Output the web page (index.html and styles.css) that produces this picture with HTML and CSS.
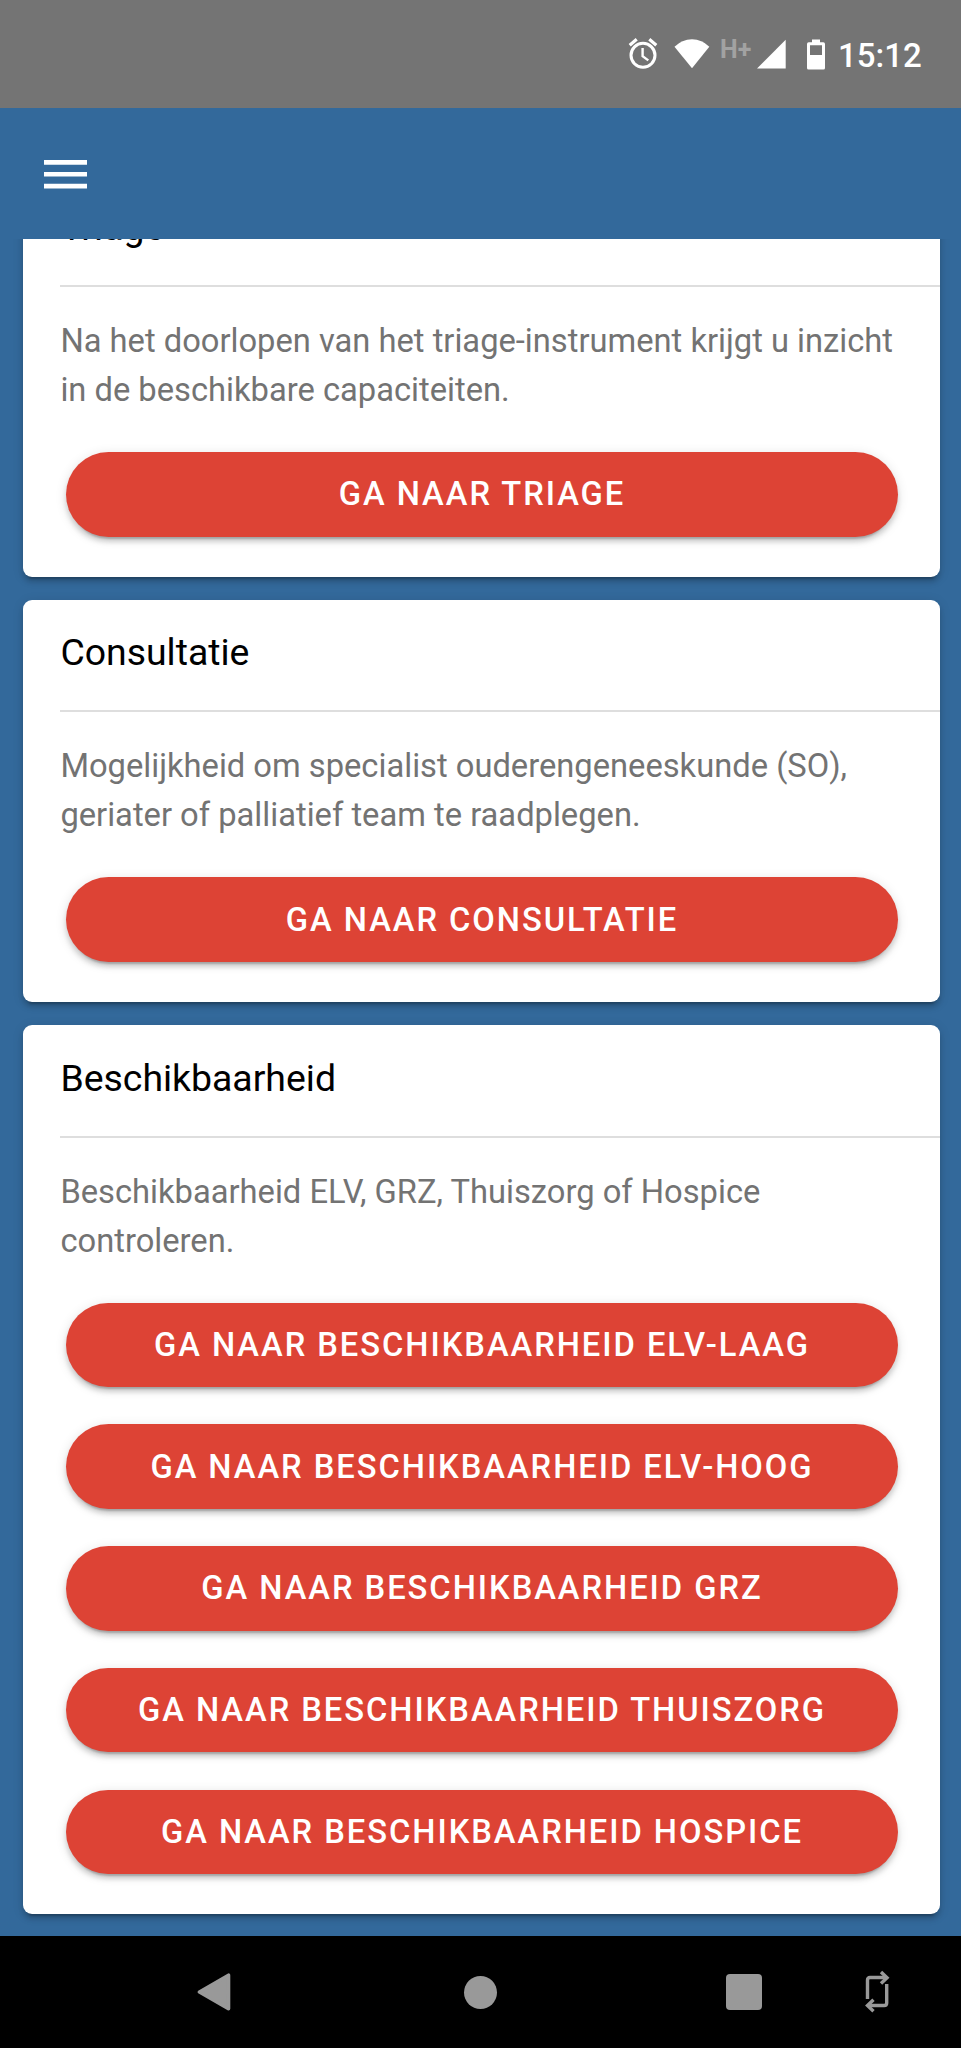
FILE: index.html
```html
<!DOCTYPE html>
<html lang="nl">
<head>
<meta charset="utf-8">
<title>Triage</title>
<link rel="stylesheet" href="styles.css">
</head>
<body>
<div class="statusbar">
  <svg class="alarm" width="32" height="36" viewBox="627 36 32 36" fill="none" stroke="#fff"><circle cx="643" cy="55.3" r="12" stroke-width="3"/><path d="M629.7 45.2l7-5.9M656.3 45.2l-7-5.9" stroke-width="3.2"/><path d="M642.6 48v8.2l5.7 4.2" stroke-width="2.4"/></svg>
  <svg class="wifi" width="36" height="36" viewBox="674 36 36 36"><path d="M674.5 46.7Q682 39.2 692 39.2t17.300 7.500L692 68.300z" fill="#fff"/></svg>
  <span class="network">H+</span>
  <svg class="signal" width="30" height="36" viewBox="756 36 30 36"><path d="M757 68.500L785.700 39.800V68.500z" fill="#fff"/></svg>
  <svg class="battery" width="18" height="36" viewBox="807 36 18 36"><path fill-rule="evenodd" d="M812 39.500h8v2.800h3.300q1.700 0 1.700 1.700v24q0 1.500-1.500 1.500h-15q-1.500 0-1.500-1.500V44q0-1.700 1.700-1.700h3.300zM810 45.300V55h12v-9.700z" fill="#fff"/></svg>
  <span class="clock">15:12</span>
</div>
<header class="toolbar">
  <svg width="43" height="29" viewBox="0 0 43 29"><path d="M0 0h43v4.700H0zM0 11.900h43v4.700H0zM0 23.800h43v4.700H0z" fill="#fff"/></svg>
</header>
<main class="content">
  <section class="card">
    <h2>Triage</h2>
    <div class="body">
      <p>Na het doorlopen van het triage-instrument krijgt u inzicht in de beschikbare capaciteiten.</p>
      <button>GA NAAR TRIAGE</button>
    </div>
  </section>
  <section class="card">
    <h2>Consultatie</h2>
    <div class="body">
      <p>Mogelijkheid om specialist ouderengeneeskunde (SO), geriater of palliatief team te raadplegen.</p>
      <button>GA NAAR CONSULTATIE</button>
    </div>
  </section>
  <section class="card">
    <h2>Beschikbaarheid</h2>
    <div class="body">
      <p>Beschikbaarheid ELV, GRZ, Thuiszorg of Hospice controleren.</p>
      <button>GA NAAR BESCHIKBAARHEID ELV-LAAG</button>
      <button>GA NAAR BESCHIKBAARHEID ELV-HOOG</button>
      <button>GA NAAR BESCHIKBAARHEID GRZ</button>
      <button>GA NAAR BESCHIKBAARHEID THUISZORG</button>
      <button>GA NAAR BESCHIKBAARHEID HOSPICE</button>
    </div>
  </section>
</main>
<nav class="navbar">
  <svg class="back" width="34" height="38" viewBox="0 0 34 38"><path d="M2.500 19L31.500 2.200v33.600z" fill="#999" stroke="#999" stroke-width="3.600" stroke-linejoin="round"/></svg>
  <span class="home"></span>
  <span class="recent"></span>
  <svg class="rotate" width="26" height="44" viewBox="0 0 26 44" fill="none" stroke="#999" stroke-width="3.400"><path d="M3.500 29V10q0-2.500 2.500-2.500h16"/><path d="M17 2l6 5.700-6 5.700"/><path d="M22.700 14v19q0 2.500-2.500 2.500H4"/><path d="M9.500 29.800l-6 5.700 6 5.700"/></svg>
</nav>
</body>
</html>
```
FILE: styles.css
```css
* { box-sizing: border-box; }

body {
  margin: 0;
  height: 2048px;
  overflow: hidden;
  display: flex;
  flex-direction: column;
  background: #33699b;
  font-family: Roboto, "Liberation Sans", sans-serif;
}

.statusbar {
  flex: none;
  height: 108px;
  padding: 36px 41px 0 0;
  display: flex;
  justify-content: flex-end;
  align-items: flex-start;
  background: #747474;
  color: #fff;
}

.statusbar svg { flex: none; }
.wifi { margin-left: 15px; }
.network {
  width: 36px;
  margin: 0 0 0 10px;
  font-size: 25px;
  font-weight: 700;
  line-height: 28px;
  color: #a2a2a2;
}
.battery { margin-left: 21px; }
.clock {
  width: 82px;
  margin-left: 13px;
  font-size: 33px;
  font-weight: 500;
  line-height: 39px;
  white-space: nowrap;
}

.toolbar {
  flex: none;
  height: 131px;
  padding: 52px 44px;
}
.toolbar svg { display: block; }

.content {
  flex: 1;
  min-height: 0;
  overflow: hidden;
  padding: 0 21px 0 23px;
}

.card {
  height: 402px;
  margin-bottom: 23.400px;
  background: #fff;
  border-radius: 9px;
  box-shadow: 0 7px 2px -5px rgba(0, 0, 0, .2), 0 5px 5px rgba(0, 0, 0, .14), 0 2px 12px rgba(0, 0, 0, .12);
}
.card:first-child { margin-top: -64.500px; }
.card:last-child { height: 888.500px; }

.card h2 {
  height: 112.500px;
  margin: 0 0 0 37.400px;
  padding-top: 30.500px;
  border-bottom: 2px solid #dedede;
  font-size: 37.400px;
  font-weight: 400;
  line-height: 45px;
  color: #000;
}

.body {
  padding: 30px 42px 0 37.400px;
}
.body p {
  margin: 0 0 37px;
  font-size: 32.700px;
  line-height: 49px;
  color: #737373;
}

button {
  display: block;
  width: 832px;
  height: 84.500px;
  margin: 0 0 37.200px 5.600px;
  padding: 0;
  border: 0;
  border-radius: 43px;
  background: #dd4335;
  box-shadow: 0 7px 2px -5px rgba(0, 0, 0, .2), 0 5px 5px rgba(0, 0, 0, .14), 0 2px 12px rgba(0, 0, 0, .12);
  font-family: inherit;
  font-size: 32.700px;
  font-weight: 500;
  letter-spacing: 1.960px;
  color: #fff;
}

.navbar {
  flex: none;
  height: 112px;
  padding-left: 197px;
  display: flex;
  align-items: center;
  background: #000;
}
.home {
  width: 33px;
  height: 33px;
  margin-left: 233px;
  border-radius: 50%;
  background: #999;
}
.recent {
  width: 36px;
  height: 36px;
  margin-left: 229px;
  border-radius: 4px;
  background: #999;
}
.rotate { margin-left: 102px; }
```
